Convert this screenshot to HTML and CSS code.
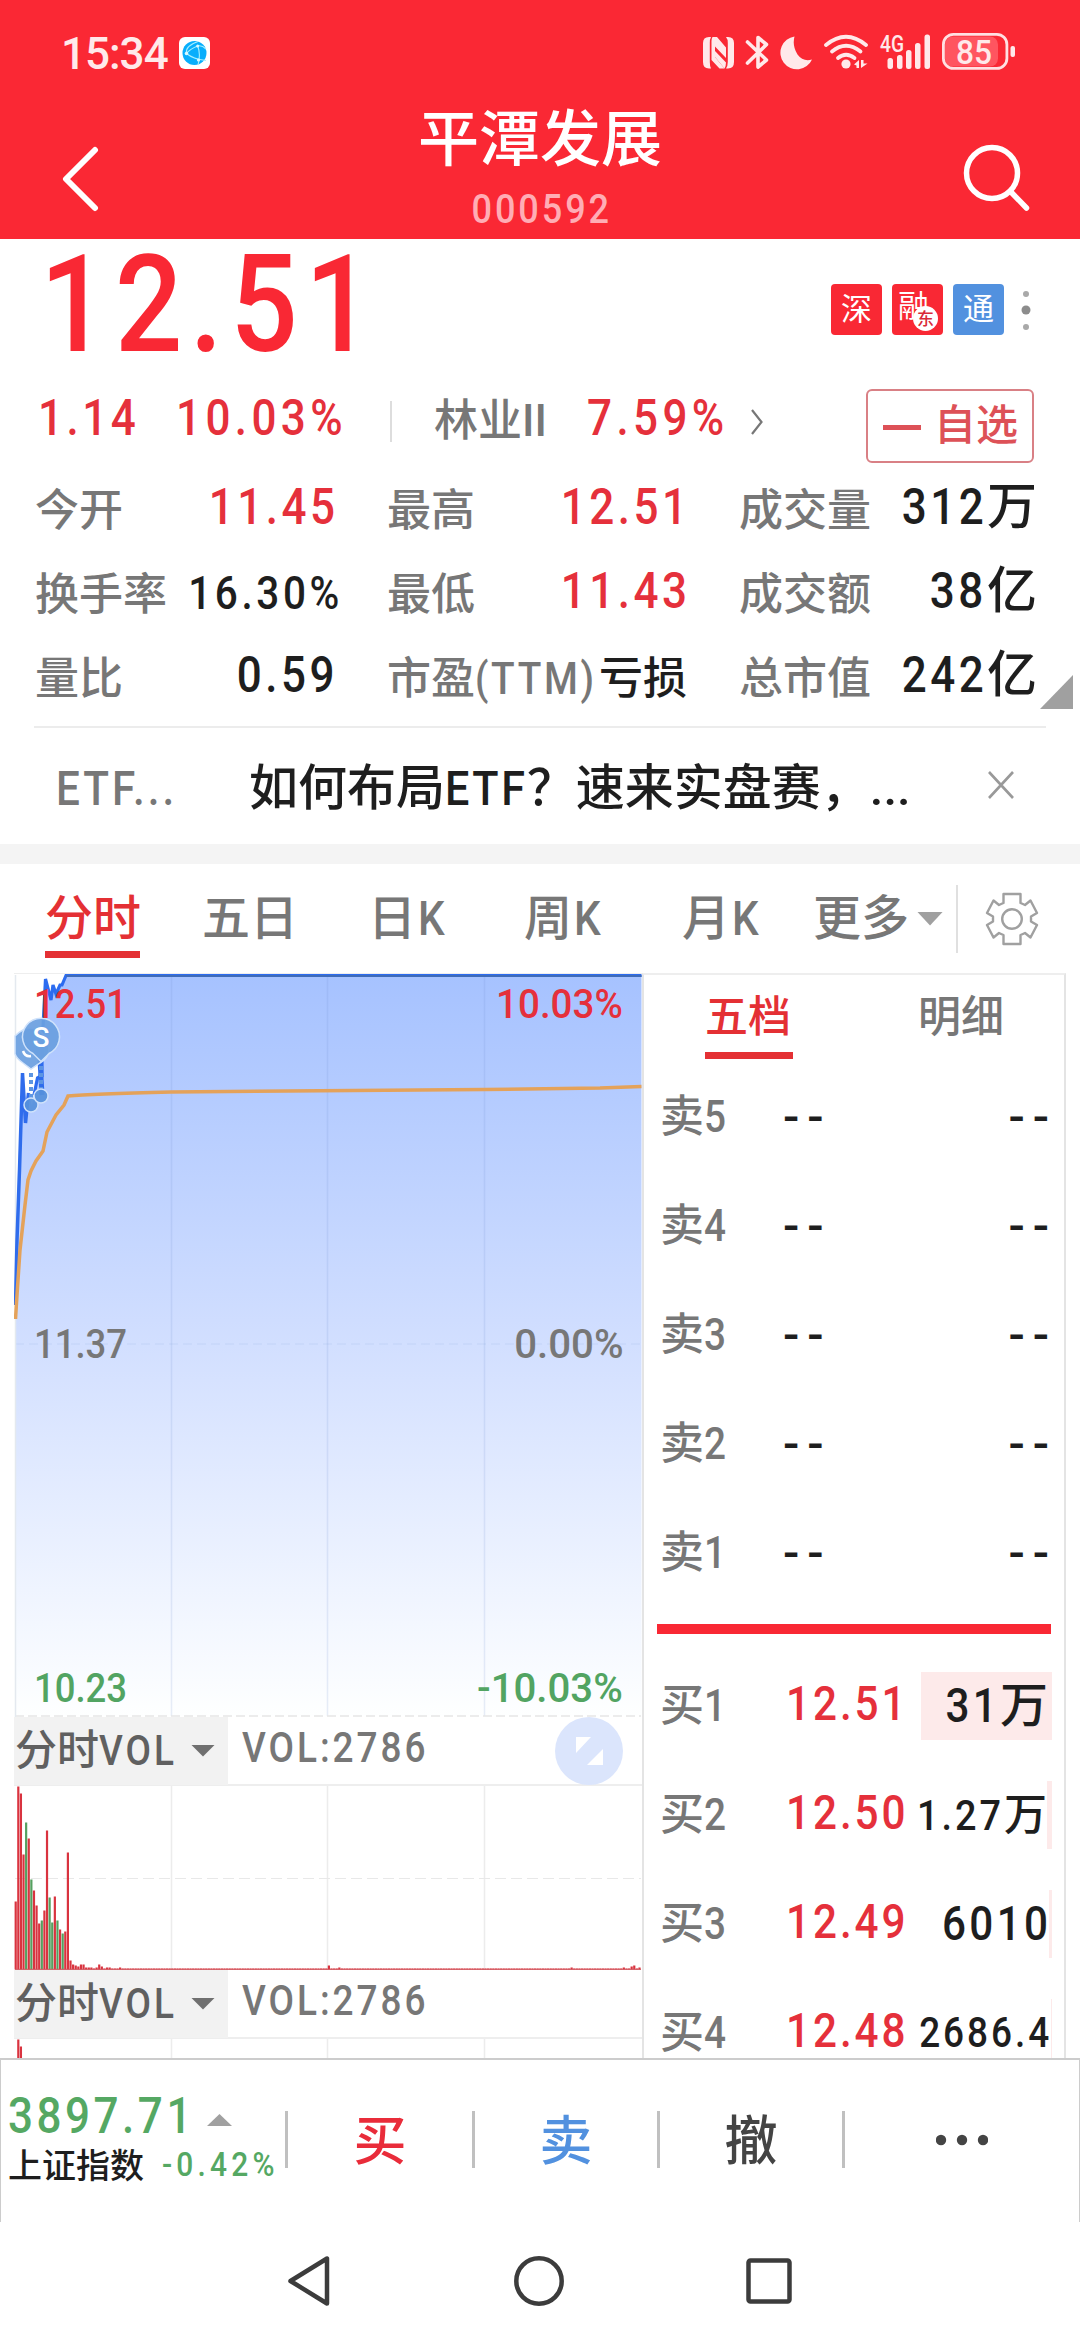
FILE: index.html
```html
<!DOCTYPE html>
<html lang="zh-CN">
<head>
<meta charset="utf-8">
<title>平潭发展 000592</title>
<link rel="stylesheet" href="styles.css">
</head>
<body>
<div class="app">
  <header class="header">
    <div class="status">
      <span class="clock">15:34</span>
      <svg class="globe" width="31" height="32" viewBox="0 0 31 32"><rect width="31" height="32" rx="6" fill="#fff"/><circle cx="15.5" cy="16" r="12" fill="#08aefc"/><g fill="none" stroke="#a5efff" stroke-width="1.1"><path d="M19 4.500Q6 9 7.500 16.500Q14 22 27 23.500M18.500 8.500Q22 17 19 28M7.500 16.500Q11 12 18.500 9Q23 8 27 12"/></g><g fill="#d9faff"><circle cx="7.500" cy="16.500" r="1.800"/><circle cx="18.700" cy="9" r="1.500"/><circle cx="19.500" cy="23" r="1.600"/></g></svg>
      <svg class="sysicons" width="320" height="44" viewBox="700 30 320 44">
        <g fill="#ffe9ea">
          <path d="M711 37H709Q703 37 703 43V62Q703 68.500 709 68.500H711Q709.800 66 709.800 62V43Q709.800 39 711 37Z"/>
          <path d="M726 37H728Q734 37 734 43V62Q734 68.500 728 68.500H726Q727.800 66 727.800 62V43Q727.800 39 726 37Z"/>
          <path d="M712.500 37H717L726 47.500V58L715 46.500V57L724.500 68.500H719.500L711.500 60V41Q711.500 38.500 712.500 37Z"/>
          <path d="M715 51L726 62.500Q726 66 724.500 68.500L715 57Z"/>
          <path d="M747.500 42L766.500 60L758 67V37.500L766.500 44.500L747.500 63" fill="none" stroke="#ffe9ea" stroke-width="3.600" stroke-linejoin="round" stroke-linecap="round"/>
          <path d="M794.500 36.500A16.500 16.500 0 1 0 812 59.500Q803 62 797.500 54.500Q792 46 794.500 36.500Z"/>
          <g fill="none" stroke="#ffe9ea" stroke-width="3.800" stroke-linecap="round"><path d="M826 45Q846 28.500 866 45"/><path d="M832 51.500Q846 40 860.500 51.500"/><path d="M838 58Q846 51.500 854.500 58"/></g>
          <circle cx="846" cy="64" r="4.600"/>
          <path d="M854 64.500L859 60V68H856.500V65.500ZM861 60V68L867.500 63.500H863.500V60Z"/>
          <rect x="887.500" y="58" width="5.500" height="11" rx="2.500"/><rect x="897" y="55" width="5.500" height="14" rx="2.500"/><rect x="906" y="50" width="5.500" height="19" rx="2.500"/><rect x="915" y="43" width="5.500" height="26" rx="2.500"/><rect x="924.500" y="34.500" width="5.500" height="34.500" rx="2.500"/>
          <rect x="945" y="36.500" width="53" height="30" rx="8" fill="#ff5560"/>
          <rect x="943.400" y="34.400" width="63.500" height="34" rx="10" fill="none" stroke="#ffe0e2" stroke-width="2.800"/>
          <rect x="1010.500" y="46" width="4.500" height="11" rx="2"/>
          <text class="net" x="880" y="51.500" textLength="24" lengthAdjust="spacingAndGlyphs">4G</text>
          <text class="bat" x="956" y="63.500" textLength="36" lengthAdjust="spacingAndGlyphs">85</text>
        </g>
      </svg>
    </div>
    <div class="titlebar">
      <svg class="back" width="40" height="72" viewBox="0 0 40 72"><path d="M33 7L4 36L33 65" fill="none" stroke="#fff" stroke-width="6" stroke-linecap="round" stroke-linejoin="round"/></svg>
      <div class="title"><h1>平潭发展</h1><p><i class="n mid">000592</i></p></div>
      <svg class="search" width="68" height="70" viewBox="0 0 68 70"><circle cx="29" cy="30" r="25.500" fill="none" stroke="#fff" stroke-width="5.500"/><path d="M48 49L63.500 65" stroke="#fff" stroke-width="5.500" stroke-linecap="round"/></svg>
    </div>
  </header>

  <section class="quote">
    <div class="price-row">
      <span class="price n l">12.51</span>
      <div class="tags">
        <span class="tag">深</span>
        <span class="tag tag-rong">融<i>东</i></span>
        <span class="tag tag-blue">通</span>
        <svg width="10" height="44" viewBox="0 0 10 44"><circle cx="5" cy="6" r="3" fill="#a9a9a9"/><circle cx="5" cy="22" r="4.500" fill="#8c8c8c"/><circle cx="5" cy="39" r="3" fill="#a9a9a9"/></svg>
      </div>
    </div>
    <div class="change-row">
      <span class="chg c1 n l">1.14</span><span class="chg c2 n l">10.03%</span><i class="vline"></i>
      <span class="sector">林业II</span><span class="chg c3 n l">7.59%</span>
      <svg class="chev" width="14" height="28" viewBox="0 0 14 28"><path d="M2 2L11.500 14L2 26" fill="none" stroke="#777" stroke-width="2.200"/></svg>
      <span class="fav"><i></i>自选</span>
    </div>
    <div class="stats">
      <div class="stat"><span>今开</span><b class="red n r">11.45</b></div>
      <div class="stat"><span>最高</span><b class="red n r">12.51</b></div>
      <div class="stat"><span>成交量</span><b><i class="n">312</i>万</b></div>
      <div class="stat"><span>换手率</span><b class="sm n r">16.30%</b></div>
      <div class="stat"><span>最低</span><b class="red n r">11.43</b></div>
      <div class="stat"><span>成交额</span><b><i class="n">38</i>亿</b></div>
      <div class="stat"><span>量比</span><b class="n r">0.59</b></div>
      <div class="stat"><span>市盈<i class="n l ttm">(TTM)</i></span><b class="loss">亏损</b></div>
      <div class="stat"><span>总市值</span><b><i class="n">242</i>亿</b></div>
      <i class="corner"></i>
    </div>
    <div class="news">
      <span class="src"><i class="n l">ETF...</i></span><span class="headline">如何布局<i class="n l">ETF</i>？速来实盘赛，...</span>
      <svg width="28" height="30" viewBox="0 0 28 30"><path d="M2 2L26 28M26 2L2 28" stroke="#999" stroke-width="2.600"/></svg>
    </div>
  </section>

  <nav class="tabs">
    <span class="on">分时</span><span>五日</span><span>日<i class="n l">K</i></span><span>周<i class="n l">K</i></span><span>月<i class="n l">K</i></span>
    <span class="more">更多<i></i></span>
    <svg width="56" height="56" viewBox="-28 -28 56 56"><path d="M-8.500 -25H8.500V-16Q11 -15 13 -14L18.500 -18.500L25 -6L19 -2.500V2.500L25 6L18.500 18.500L13 14Q11 15 8.500 16V25H-8.500V16Q-11 15 -13 14L-18.500 18.500L-25 6L-19 2.500V-2.500L-25 -6L-18.500 -18.500L-13 -14Q-11 -15 -8.500 -16Z" fill="none" stroke="#a0a0a0" stroke-width="2.400" stroke-linejoin="round"/><circle r="9.800" fill="none" stroke="#a0a0a0" stroke-width="2.400"/></svg>
  </nav>

  <main class="board">
    <section class="chart">
      <div class="plot">
        <svg width="628" height="744" viewBox="14 973 628 744">
          <defs><linearGradient id="sky" x1="0" y1="975" x2="0" y2="1716" gradientUnits="userSpaceOnUse"><stop offset="0" stop-color="#a6c2ff"/><stop offset=".5" stop-color="#d2dfff"/><stop offset="1" stop-color="#feffff"/></linearGradient></defs>
          <path d="M15 1319L16 1250L18 1170L22.500 1073L25 1124L28 1092L32 1106L36 1080L40 1070L43 1040L45 979L50 1000L53 985L56 994L60 984H62L66 975.500H641.500V1716H15Z" fill="url(#sky)"/>
          <g stroke="#6f8fcf" stroke-opacity=".16" stroke-width="1.500"><path d="M171.500 976V1716M327.500 976V1716M484.500 976V1716"/><path d="M15 1344H641" stroke-dasharray="9 5" stroke-opacity=".1"/></g>
          <path d="M15 1716H641" stroke="#e6e6e6" stroke-width="1.500" stroke-dasharray="9 4"/>
          <path d="M15.500 975V1717" stroke="#e4e9ef" stroke-width="1.500"/>
          <path d="M15.500 1305L17 1240L19.500 1170L22.500 1073L25.500 1123L28.500 1093" fill="none" stroke="#2f6cec" stroke-width="3.500"/>
          <path d="M34 1095L37.500 1078L42 1076V1046L45.500 979L51 1000L53 985L56 994L60 985H62L66 975.500H641.500" fill="none" stroke="#2c6cf0" stroke-width="3.200"/>
          <path d="M40 1060L42 1095" stroke="#2f6cec" stroke-width="5"/>
          <path d="M66 976H641.500" stroke="#3f6bb8" stroke-width="2"/>
          <path d="M15.500 1319L17 1295L20 1250L25 1205L28 1180L31 1171L36 1161L43 1151L47 1132L56 1115L64 1105L68 1096Q90 1094 171 1092L484 1089.500L600 1088L641.500 1086.500" fill="none" stroke="#e4a25a" stroke-width="3.500"/>
          <path d="M31 1073V1098M41 1066V1090" stroke="#5c95e2" stroke-width="4" stroke-dasharray="4 3"/>
          <g fill="#6b9fe0" fill-opacity=".93" stroke="#cfe2fb" stroke-width="1.500">
            <path d="M15 1036Q31 1020 45 1036Q55 1054 40 1063L31 1069L23 1063Q17 1059 15 1054Z"/>
            <path d="M23 1051Q25 1057 31 1056" fill="none" stroke="#fff" stroke-width="2.500"/>
            <path d="M33 1053.500A18.500 18.500 0 1 1 49 1053.500L41 1061.500Z"/>
            <circle cx="31" cy="1105" r="7" fill="#5590dc"/><circle cx="41" cy="1096" r="7" fill="#5590dc"/>
          </g>
          <text class="pin" x="41" y="1047" text-anchor="middle">S</text>
        </svg>
        <span class="lab red tl">12.51</span><span class="lab red tr">10.03%</span>
        <span class="lab ml">11.37</span><span class="lab mr">0.00%</span>
        <span class="lab green bl">10.23</span><span class="lab green br">-10.03%</span>
      </div>
      <div class="volbar"><span class="volsel"><span>分时<i class="n l">VOL</i></span><i class="tri"></i></span><span class="volval n l">VOL:2786</span>
        <svg width="68" height="68" viewBox="0 0 68 68"><circle cx="34" cy="34" r="34" fill="#dbe5fc"/><path d="M21 20H36L21 36ZM48 32V48H32Z" fill="#fff"/></svg>
      </div>
      <div class="volplot"><svg id="vol1" width="628" height="184" viewBox="14 0 628 184"></svg></div>
      <div class="volbar"><span class="volsel"><span>分时<i class="n l">VOL</i></span><i class="tri"></i></span><span class="volval n l">VOL:2786</span></div>
      <div class="volplot volcut"><svg id="vol2" width="628" height="184" viewBox="14 0 628 184"></svg></div>
    </section>

    <section class="book">
      <div class="booktabs"><span class="on">五档</span><span>明细</span></div>
      <div class="lvl"><span>卖<i class="n l">5</i></span><b>--</b><em>--</em></div>
      <div class="lvl"><span>卖<i class="n l">4</i></span><b>--</b><em>--</em></div>
      <div class="lvl"><span>卖<i class="n l">3</i></span><b>--</b><em>--</em></div>
      <div class="lvl"><span>卖<i class="n l">2</i></span><b>--</b><em>--</em></div>
      <div class="lvl"><span>卖<i class="n l">1</i></span><b>--</b><em>--</em></div>
      <i class="split"></i>
      <div class="lvl buy"><span>买<i class="n l">1</i></span><b class="n l">12.51</b><em class="q1"><i class="n">31</i>万</em></div>
      <div class="lvl buy"><span>买<i class="n l">2</i></span><b class="n l">12.50</b><em class="q2"><i class="n">1.27</i>万</em></div>
      <div class="lvl buy"><span>买<i class="n l">3</i></span><b class="n l">12.49</b><em class="q3"><i class="n r">6010</i></em></div>
      <div class="lvl buy"><span>买<i class="n l">4</i></span><b class="n l">12.48</b><em class="q4"><i class="n r">2686.4</i></em></div>
    </section>
  </main>

  <footer class="actions">
    <div class="index">
      <div class="idx1"><span class="n l">3897.71</span><i></i></div>
      <div class="idx2"><span>上证指数</span><b class="n l">-0.42%</b></div>
    </div>
    <span class="act buy-btn">买</span><span class="act sell-btn">卖</span><span class="act">撤</span>
    <span class="act"><svg width="52" height="12" viewBox="0 0 52 12"><circle cx="5" cy="6" r="5.200" fill="#444"/><circle cx="26" cy="6" r="5.200" fill="#444"/><circle cx="47" cy="6" r="5.200" fill="#444"/></svg></span>
  </footer>
  <div class="sysnav">
    <svg width="46" height="54" viewBox="0 0 46 54"><path d="M41 4.500V49.500L4.500 27Z" fill="none" stroke="#3c3c3c" stroke-width="4.500" stroke-linejoin="round"/></svg>
    <svg width="50" height="50" viewBox="0 0 50 50"><circle cx="25" cy="25" r="22.700" fill="none" stroke="#3c3c3c" stroke-width="4.500"/></svg>
    <svg width="46" height="46" viewBox="0 0 46 46"><rect x="2.500" y="2.500" width="41" height="41" rx="2" fill="none" stroke="#3c3c3c" stroke-width="4.500"/></svg>
  </div>
</div>
<script src="volume.js"></script>
</body>
</html>
```
FILE: styles.css
```css
* { box-sizing: border-box; }
body { margin: 0; background: #fff; font-family: Roboto, "Noto Sans CJK SC", sans-serif; font-weight: 500; line-height: 1.2; color: #1e1e1e; }
i, em { font-style: normal; }
b { font-weight: 500; }
svg { display: block; flex: none; }
.app { width: 1080px; height: 2340px; display: flex; flex-direction: column; overflow: hidden; white-space: nowrap; }
.red { color: #e5303b; }
.green { color: #52a462; }
/* Narrow, widely spaced numerals */
.n { display: inline-block; letter-spacing: .08em; transform: scaleX(.88); transform-origin: right; }
.n.l { transform-origin: left; }
.n.mid { transform-origin: center; }
.n.r { margin-right: -.065em; }

.header { height: 239px; background: #fa2834; color: #fff; }
.status { height: 96px; padding: 0 60px 0 61px; display: flex; align-items: center; }
.clock { font-size: 44px; line-height: 60px; margin-top: 11px; width: 118px; color: #ffe9ea; letter-spacing: -1px; }
.globe { margin-top: 9px; }
.sysicons { margin: 8px 0 0 auto; }
.net { font-size: 24px; }
.bat { font-size: 33px; }
.titlebar { height: 143px; display: flex; }
.back { margin: 47px 0 0 62px; }
.title { flex: 1; text-align: center; }
.title h1 { margin: 6px 0 0 15px; font-size: 61px; line-height: 76px; font-weight: 500; }
.title p { margin: 8px 0 0 18px; font-size: 41px; line-height: 46px; font-weight: 500; color: #ffadb5; }
.search { margin: 47px 49px 0 0; }

.price-row { height: 128px; display: flex; align-items: center; justify-content: space-between; padding: 0 49px 0 40px; }
.price { font-size: 135px; line-height: 128px; color: #f92834; margin-top: 3px; }
.price.n { letter-spacing: .062em; }
.tags { display: flex; gap: 10px; align-items: center; margin-top: 13px; }
.tag { width: 51px; height: 51px; border-radius: 4px; background: #f92834; color: #fff; font-size: 31px; line-height: 51px; text-align: center; position: relative; font-weight: 400; }
.tag-rong { line-height: 46px; text-align: left; padding-left: 6px; }
.tag-rong i { position: absolute; right: 5px; bottom: 4px; width: 25px; height: 25px; border-radius: 50%; background: #fff; color: #d92a38; font-size: 17px; line-height: 26px; text-align: center; font-weight: 500; }
.tag-blue { background: #5291df; }
.tags svg { margin-left: 7px; }
.change-row { height: 102px; display: flex; align-items: center; padding-left: 38px; }
.chg { font-size: 50px; color: #e5303b; }
.c1 { width: 138px; }
.chg.c2, .chg.c3 { letter-spacing: .1em; }
.c2 { width: 214px; }
.vline { width: 2px; height: 41px; background: #ddd; margin-top: 6px; }
.sector { font-size: 44px; color: #777; margin: 6px 0 0 42px; width: 153px; }
.c3 { width: 163px; }
.chev { margin-top: 8px; }
.fav { margin: 16px 0 0 102px; width: 168px; height: 74px; border: 2px solid #d98085; border-radius: 6px; font-size: 42px; line-height: 72px; color: #dd5157; display: flex; align-items: center; padding-left: 15px; gap: 13px; }
.fav i { width: 38px; height: 5px; background: #dd5157; margin-top: 2px; }

.stats { height: 257px; display: grid; grid-template-columns: 300px 300px 298px; grid-auto-rows: 84px; column-gap: 52px; padding-left: 35px; position: relative; }
.stat { display: flex; justify-content: space-between; }
.stat span { font-size: 44px; line-height: 84px; color: #777; }
.stat .ttm { letter-spacing: .07em; margin-right: -20px; }
.stat b { font-size: 50px; line-height: 76px; }
.stat .sm { font-size: 46px; line-height: 80px; letter-spacing: .09em; }
.stat .loss { font-size: 44px; line-height: 84px; }
.corner { position: absolute; left: 1040px; top: 206px; width: 33px; height: 34px; background: #a0a0a0; clip-path: polygon(100% 0, 100% 100%, 0 100%); }
.news { height: 118px; margin: 0 34px; border-top: 2px solid #ececec; padding-top: 6px; display: flex; align-items: center; }
.src { font-size: 48px; color: #777; width: 215px; padding-left: 22px; }
.src .n { letter-spacing: .07em; }
.headline { font-size: 49px; flex: none; width: 738px; }
.headline .n { letter-spacing: .06em; margin-right: -12px; }
.news svg { margin-bottom: 8px; }

.tabs { height: 129px; border-top: 20px solid #f4f4f4; display: grid; grid-template-columns: 157px 166px 156px 158px 131px 145px 82px; padding-left: 45px; align-items: center; font-size: 48px; color: #777; }
.tabs .on { color: #e43034; width: 95px; height: 79px; line-height: 79px; border-bottom: 7px solid #e43034; align-self: start; margin-top: 15px; }
.tabs .n { margin-left: 2px; }
.more { display: flex; align-items: center; gap: 8px; height: 68px; border-right: 2px solid #e0e0e0; }
.more i { width: 26px; height: 14px; background: #a0a0a0; clip-path: polygon(0 0, 100% 0, 50% 100%); }
.tabs svg { margin-left: 26px; }

.board { height: 1085px; display: flex; padding: 0 14px; overflow: hidden; }
.chart { width: 628px; }
.plot { position: relative; height: 744px; border-top: 1px solid #eee; }
.plot svg { margin-top: -1px; }
.lab { position: absolute; font-size: 41px; line-height: 46px; }
.ml, .mr { color: #777; }
.tl, .ml, .bl { left: 20px; transform: scaleX(.89); transform-origin: left; }
.tr, .mr, .br { right: 19px; transform: scaleX(.98); transform-origin: right; }
.tr { transform: scaleX(.94); }
.tl, .tr { top: 7px; }
.ml, .mr { top: 347px; }
.bl, .br { top: 691px; }
.pin { font-size: 28px; fill: #fff; }
.volbar { height: 69px; display: flex; align-items: center; border-bottom: 2px solid #eee; }
.volsel { width: 214px; height: 68px; background: #f2f2f2; font-size: 42px; line-height: 68px; color: #606060; display: flex; align-items: center; justify-content: space-between; padding: 0 13px 0 1px; }
.tri { width: 24px; height: 12px; background: #707070; clip-path: polygon(0 0, 100% 0, 50% 100%); }
.volval { font-size: 42px; line-height: 62px; color: #777; margin: 0 0 6px 14px; }
.volbar svg { margin: 0 19px 0 auto; }
.volplot { height: 184px; }
.volcut { height: 20px; overflow: hidden; }

.book { width: 424px; border: 2px solid #e4e4e4; border-top-color: #eee; border-width: 2px 2px 0 2px; padding-left: 14px; }
.booktabs { height: 84px; display: grid; grid-template-columns: 213px 1fr; padding-left: 47px; font-size: 43px; line-height: 84px; color: #777; }
.booktabs .on { width: 88px; height: 84px; color: #e43034; border-bottom: 7px solid #e43034; }
.lvl { height: 109px; display: flex; align-items: center; font-size: 44px; line-height: 68px; color: #777; }
.lvl span { flex: none; width: 126px; padding-left: 2px; }
.lvl b { font-size: 48px; color: #1e1e1e; }
.lvl em { font-size: 48px; color: #1e1e1e; margin-left: auto; margin-right: 12px; flex: none; width: 131px; display: flex; justify-content: flex-end; padding-right: 4px; }
.booktabs + .lvl { margin-top: 3px; }
.lvl:not(.buy) b, .lvl:not(.buy) em { letter-spacing: 8px; }
.lvl:not(.buy) b { margin-left: -1px; }
.lvl:not(.buy) em { padding: 0; margin-right: 7px; }
.split { display: block; height: 10px; width: 394px; background: #f92834; margin: 17px 0 17px -1px; }
.lvl.buy b { color: #e5303b; margin: -4px 0 0 2px; width: 125px; letter-spacing: .07em; }
.lvl .q1 { background: #fdeaea; }
.lvl .q2 { font-size: 43px; border-right: 5px solid #fdeaea; padding: 0; }
.lvl .q3 { border-right: 3px solid #fdeaea; padding-right: 1px; }
.lvl .q4 { font-size: 42px; border-right: 1px solid #fdeaea; padding-right: 2px; }

.actions { height: 164px; border: 2px solid #ccc; border-width: 2px 1px 0 1px; background: #fff; display: grid; grid-template-columns: 284px 187px 185px 185px 1fr; }
.index { padding: 29px 0 0 7px; height: 164px; }
.idx1 { font-size: 50px; line-height: 54px; color: #55a863; display: flex; align-items: center; }
.idx1 .n { width: 199px; }
.idx1 i { width: 25px; height: 12px; margin-top: 8px; background: #a0a0a0; clip-path: polygon(50% 0, 100% 100%, 0 100%); }
.idx2 { display: flex; font-size: 34px; line-height: 46px; gap: 18px; }
.idx2 b { color: #55a863; letter-spacing: .14em; margin-top: -2px; }
.act { height: 57px; margin-top: 51px; border-left: 3px solid #c0c0c0; display: flex; align-items: center; justify-content: center; font-size: 53px; color: #444; line-height: 61px; }
.act:nth-of-type(-n+3) { padding-top: 6px; }
.buy-btn { color: #e92c3a; }
.sell-btn { color: #5291df; }
.sysnav { height: 118px; display: flex; align-items: center; padding-left: 286px; gap: 182px; }
```
FILE: volume.js
```js
// One bar per trading minute: height in px, negative when the minute closed lower.
const bars = [68, 183, 176, 115, -147, 131, -90, 79, 64, 46, -49, 59, 139, -72, -47, 73, -49, 40, -36, 38, 117,
  9, 5, 4, 3, 5, 5, 2, 2, 2, 1, 2, 5, 3, 1, 2, 2, 1, 1, 1, 2];
const spikes = { 120: 4, 124: 2, 213: 2, 233: 2, 236: 3, 237: 4, 239: 2 };
let out = '<path d="M171.500 0V184M327.500 0V184M484.500 0V184" stroke="#ececec" stroke-width="1.500"/>' +
  '<path d="M15 92.500H641" stroke="#e8e8e8" stroke-dasharray="11 5"/>';
for (let i = 0; i < 240; i++) {
  const v = bars[i] || spikes[i] || 1;
  const h = Math.abs(v);
  out += `<rect x="${(14.600 + 2.610 * i).toFixed(2)}" y="${183.500 - h}" width="2.200" height="${h}" fill="${v < 0 ? '#55a060' : '#d9333f'}"/>`;
}
out += '<path d="M15 183.300H641" stroke="#d05058"/>';
document.getElementById('vol1').innerHTML = out;
document.getElementById('vol2').innerHTML = out;
```
